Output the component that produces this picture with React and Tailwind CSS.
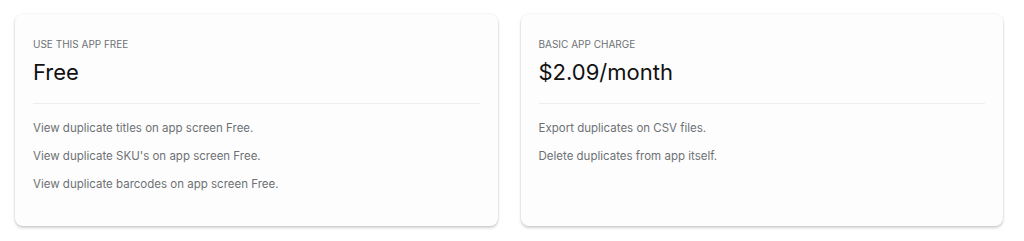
import React from "react";

const PLANS = [
  {
    label: "USE THIS APP FREE",
    price: "Free",
    features: [
      "View duplicate titles on app screen Free.",
      "View duplicate SKU's on app screen Free.",
      "View duplicate barcodes on app screen Free.",
    ],
  },
  {
    label: "BASIC APP CHARGE",
    price: "$2.09/month",
    features: ["Export duplicates on CSV files.", "Delete duplicates from app itself."],
  },
];

const PlanCard = ({ plan }) => (
  <div className="h-[212px] bg-[#fdfdfd] rounded-lg shadow-[0_2px_3px_rgba(0,0,0,0.18),0_0_0_1px_rgba(0,0,0,0.03)] px-[18px] pt-[24px]">
    <p className="text-[10px] leading-[12px] text-[#6d7175]">{plan.label}</p>
    <h2 className="mt-[7px] text-[22px] leading-[30px] text-[#111]">{plan.price}</h2>
    <div className="mt-[16px] border-t border-[#eeeeee]"></div>
    <ul className="mt-[16px] flex flex-col gap-[12px]">
      {plan.features.map((f) => (
        <li key={f} className="text-[11.5px] leading-[16px] text-[#6d7175]">
          {f}
        </li>
      ))}
    </ul>
  </div>
);

export default function App() {
  return (
    <div className="min-h-screen bg-white font-['Inter',sans-serif] pl-[15px] pr-[21px] pt-[14px]">
      <div className="grid grid-cols-2 gap-[23px]">
        {PLANS.map((p) => (
          <PlanCard key={p.label} plan={p} />
        ))}
      </div>
    </div>
  );
}
